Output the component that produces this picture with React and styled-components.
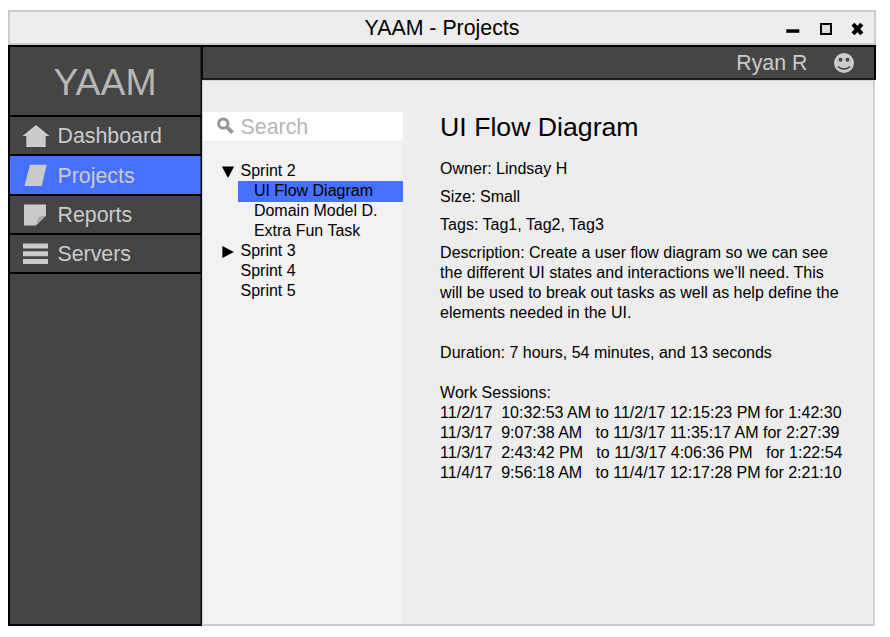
import React from "react";
import styled, { createGlobalStyle, css } from "styled-components";

const GlobalStyle = createGlobalStyle`
  * { box-sizing: border-box; }
  html, body { margin: 0; background: #fff; }
  body {
    font: 16px/20px "Liberation Sans", Arial, Helvetica, sans-serif;
    color: #000;
    overflow: hidden;
  }
`;

const Window = styled.div`
  width: 868px;
  height: 616px;
  margin: 10px 0 0 8px;
  display: flex;
  flex-direction: column;
`;

const TitleBar = styled.header`
  height: 35px;
  flex: none;
  display: grid;
  grid-template-columns: 1fr auto 1fr;
  align-items: center;
  border: 2px solid #cbcbcb;
  background: #ededed;
`;

const WindowTitle = styled.h1`
  grid-column: 2;
  margin: 0;
  font-size: 21.33px;
  line-height: 28px;
  font-weight: 400;
`;

const WindowControls = styled.div`
  justify-self: end;
  display: flex;
  margin-right: 9px;
  padding-top: 2px;
`;

const Body = styled.div`
  flex: 1;
  min-height: 0;
  display: flex;
`;

const Sidebar = styled.nav`
  width: 194px;
  flex: none;
  background: #454545;
  border: 2px solid #000;
  border-right: 1px solid #0c0c0c;
  box-shadow: inset -1px 0 #2a2a2a;
`;

const Logo = styled.div`
  height: 68px;
  padding: 3px 1px 0 0;
  font-size: 37.33px;
  line-height: 65px;
  text-align: center;
  color: #b6b6b6;
`;

const NavItem = styled.a`
  height: ${(p) => p.$height}px;
  display: flex;
  align-items: center;
  border-top: 2px solid #000;
  box-shadow: inset -1px 0 rgba(0, 0, 0, 0.4);
  color: #cbcbcb;
  font-size: 21.33px;
  line-height: 24px;
  ${(p) =>
    p.$active &&
    css`
      padding-top: 1px;
      background: #4670ff;
    `}
`;

const NavIcon = styled.svg`
  width: 30px;
  height: 26px;
  margin: 0 6.5px 0 11px;
  flex: none;
  fill: #cbcbcb;
`;

const NavEnd = styled.div`
  height: 2px;
  background: #000;
`;

const Content = styled.div`
  flex: 1;
  min-width: 0;
  display: flex;
  flex-direction: column;
`;

const UserBar = styled.div`
  height: 35px;
  flex: none;
  display: flex;
  align-items: center;
  justify-content: flex-end;
  gap: 26.6px;
  padding-right: 20px;
  background: #454545;
  border: 2px solid #000;
  border-left-width: 1px;
  border-bottom-color: #1c1c1c;
  color: #cbcbcb;
  font-size: 21.33px;
  line-height: 28px;
`;

const Workspace = styled.div`
  flex: 1;
  min-height: 0;
  display: flex;
  margin-right: 1px;
  background: #ededed;
  border: 1px solid #d2d2d2;
  border-right-width: 2px;
  border-bottom: 2px solid #cecece;
`;

const Browser = styled.aside`
  width: 199.6px;
  flex: none;
  margin-top: 31px;
  background: #f2f2f2;
`;

const SearchBox = styled.div`
  height: 30px;
  display: flex;
  align-items: center;
  gap: 6.6px;
  padding-left: 14px;
  background: #fff;
  border-bottom: 1px solid #ececec;
  color: #b6b6b6;
  font-size: 21.33px;
  line-height: 28px;
`;

const Tree = styled.div`
  padding-top: 19px;
`;

const TreeRow = styled.div`
  display: flex;
  align-items: center;
  height: 20px;
  padding-left: 18px;
`;

const Toggle = styled.svg`
  width: 14px;
  height: 14px;
  margin-right: 5.5px;
  padding-top: 1px;
`;

const TaskRow = styled.div`
  margin-left: 35px;
  padding-left: 15.9px;
  height: 20px;
  ${(p) =>
    p.$selected &&
    css`
      background: #4670ff;
      box-shadow: 0 1px #4670ff;
    `}
`;

const Details = styled.main`
  padding: 30px 0 0 37.5px;
  white-space: pre;
`;

const Heading = styled.h2`
  margin: 0 0 16px;
  font-size: 26.67px;
  line-height: 32px;
  font-weight: 400;
`;

const Field = styled.p`
  margin: 0 0 ${(p) => p.$gap ?? 8}px;
`;

const nav = [
  {
    name: "Dashboard",
    height: 39,
    icon: <path d="M15 2 L28.5 13 H24.7 V24 H5.3 V13 H1.5 Z" />,
  },
  {
    name: "Projects",
    height: 40,
    active: true,
    icon: <path d="M9 1.7 H25.7 L20.7 23 H3.5 Z" />,
  },
  {
    name: "Reports",
    height: 39,
    icon: (
      <>
        <path d="M3 2.5 H25 V13.5 L15 23.5 H3 Z" />
        <path d="M25 13.5 L17.5 15 L15 23.5 Z" fill="#a6a6a6" />
      </>
    ),
  },
  {
    name: "Servers",
    height: 39,
    icon: <path d="M2 2.5h25v5H2zM2 10.3h25v5H2zM2 18h25v5H2z" />,
  },
];

const sprints = [
  { name: "Sprint 2", state: "open", tasks: ["UI Flow Diagram", "Domain Model D.", "Extra Fun Task"] },
  { name: "Sprint 3", state: "closed", tasks: [] },
  { name: "Sprint 4", tasks: [] },
  { name: "Sprint 5", tasks: [] },
];

const description = [
  "Description: Create a user flow diagram so we can see",
  "the different UI states and interactions we’ll need. This",
  "will be used to break out tasks as well as help define the",
  "elements needed in the UI.",
];

const sessions = [
  "11/2/17  10:32:53 AM to 11/2/17 12:15:23 PM for 1:42:30",
  "11/3/17  9:07:38 AM   to 11/3/17 11:35:17 AM for 2:27:39",
  "11/3/17  2:43:42 PM   to 11/3/17 4:06:36 PM   for 1:22:54",
  "11/4/17  9:56:18 AM   to 11/4/17 12:17:28 PM for 2:21:10",
];

const Smiley = () => (
  <svg width="20" height="20" viewBox="0 0 20 20">
    <circle cx="10" cy="10" r="10" fill="#cbcbcb" />
    <circle cx="6.5" cy="6.8" r="2" fill="#454545" />
    <circle cx="13.5" cy="6.8" r="2" fill="#454545" />
    <path d="M4 13.6 Q10 18.6 16 13.6" fill="none" stroke="#454545" strokeWidth="1.5" />
  </svg>
);

export default function App() {
  return (
    <>
      <GlobalStyle />
      <Window>
        <TitleBar>
          <WindowTitle>YAAM - Projects</WindowTitle>
          <WindowControls>
            <svg width="80" height="14" viewBox="0 0 80 14">
              <path d="M1.3 7.3h13v3.5h-13z" />
              <path d="M36 2h10v10h-10z" fill="#dedede" stroke="#000" strokeWidth="2" />
              <path d="M68 2.2 L76.8 11.8 M76.8 2.2 L68 11.8" fill="none" stroke="#000" strokeWidth="4.2" />
            </svg>
          </WindowControls>
        </TitleBar>
        <Body>
          <Sidebar>
            <Logo>YAAM</Logo>
            {nav.map((item) => (
              <NavItem key={item.name} $active={item.active} $height={item.height}>
                <NavIcon viewBox="0 0 30 26">{item.icon}</NavIcon>
                {item.name}
              </NavItem>
            ))}
            <NavEnd />
          </Sidebar>
          <Content>
            <UserBar>
              Ryan R
              <Smiley />
            </UserBar>
            <Workspace>
              <Browser>
                <SearchBox>
                  <svg width="17" height="19" viewBox="0 0 17 19" fill="none" stroke="#969696">
                    <circle cx="6.3" cy="6.6" r="4.7" strokeWidth="3" />
                    <path d="M9.5 9.8 L12 12.3" strokeWidth="2.6" />
                    <path d="M11 11.3 L15.6 15.6" strokeWidth="4" />
                  </svg>
                  Search
                </SearchBox>
                <Tree>
                  {sprints.map((sprint) => (
                    <React.Fragment key={sprint.name}>
                      <TreeRow>
                        <Toggle viewBox="0 0 14 13">
                          {sprint.state === "open" && <path d="M0.9 1.5h12.2L7 12.9z" />}
                          {sprint.state === "closed" && <path d="M1.4 0.9v12.1L12.9 7z" />}
                        </Toggle>
                        {sprint.name}
                      </TreeRow>
                      {sprint.tasks.map((task) => (
                        <TaskRow key={task} $selected={task === "UI Flow Diagram"}>
                          {task}
                        </TaskRow>
                      ))}
                    </React.Fragment>
                  ))}
                </Tree>
              </Browser>
              <Details>
                <Heading>UI Flow Diagram</Heading>
                <Field>Owner: Lindsay H</Field>
                <Field>Size: Small</Field>
                <Field>Tags: Tag1, Tag2, Tag3</Field>
                <Field $gap={20}>{description.join("\n")}</Field>
                <Field $gap={20}>Duration: 7 hours, 54 minutes, and 13 seconds</Field>
                <Field $gap={0}>Work Sessions:</Field>
                {sessions.map((session) => (
                  <Field key={session} $gap={0}>
                    {session}
                  </Field>
                ))}
              </Details>
            </Workspace>
          </Content>
        </Body>
      </Window>
    </>
  );
}
